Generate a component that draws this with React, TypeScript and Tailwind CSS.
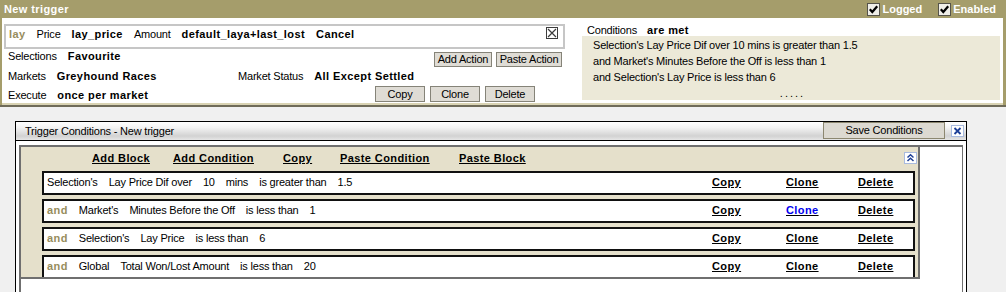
import React from "react";

const bold = "font-bold tracking-[0.4px]";

function CheckBox() {
  return (
    <svg width="13" height="13" viewBox="0 0 13 13" className="shrink-0">
      <rect x="0.5" y="0.5" width="12" height="12" fill="#efeee8" stroke="#55534a" />
      <path d="M2.8 6.2 L5.3 9 L10.2 3.2" fill="none" stroke="#000" strokeWidth="2.2" />
    </svg>
  );
}

function XBox() {
  return (
    <svg width="12" height="12" viewBox="0 0 12 12" className="shrink-0">
      <rect x="0.5" y="0.5" width="11" height="11" fill="#fff" stroke="#3c3c3c" />
      <path d="M2 2 L10 10 M10 2 L2 10" stroke="#3c3c3c" strokeWidth="1.2" />
    </svg>
  );
}

function CloseBox() {
  return (
    <svg width="13" height="12" viewBox="0 0 13 12" className="shrink-0">
      <rect x="0.5" y="0.5" width="12" height="11" fill="#fff" stroke="#a9bbdf" />
      <path d="M3.5 3 L9.5 9 M9.5 3 L3.5 9" stroke="#1d3f97" strokeWidth="1.8" />
    </svg>
  );
}

function CollapseBox() {
  return (
    <svg width="13" height="12" viewBox="0 0 13 12" className="shrink-0">
      <rect x="0.5" y="0.5" width="12" height="11" fill="#fff" stroke="#a9bbdf" />
      <path d="M3.5 5.5 L6.5 2.8 L9.5 5.5 M3.5 9 L6.5 6.3 L9.5 9" fill="none" stroke="#1d3f97" strokeWidth="1.5" />
    </svg>
  );
}

function Btn({ label, w, h }: { label: string; w: string; h: string }) {
  return (
    <div className={`${w} ${h} flex items-center justify-center border border-[#858378] bg-[#dfdcd5] leading-none`}>
      {label}
    </div>
  );
}

const conditions = [
  { and: false, parts: ["Selection's", "Lay Price Dif over", "10", "mins", "is greater than", "1.5"] },
  { and: true, parts: ["Market's", "Minutes Before the Off", "is less than", "1"] },
  { and: true, parts: ["Selection's", "Lay Price", "is less than", "6"] },
  { and: true, parts: ["Global", "Total Won/Lost Amount", "is less than", "20"] },
];

export default function App() {
  return (
    <div className="w-[1006px] h-[292px] overflow-hidden bg-[#f0f0f0] font-['Liberation_Sans',Arial,sans-serif] text-[11px] tracking-[-0.2px] text-black">
      {/* trigger panel */}
      <div className="bg-[#a59d6b] pl-[2px] pr-[3px] border-b-2 border-[#6f6b59]">
        <div className="h-[18px] flex items-center pl-[2px] pr-[7px] text-white">
          <span className={bold}>New trigger</span>
          <div className="ml-auto flex items-center">
            <CheckBox />
            <span className="font-bold tracking-normal ml-[2px]">Logged</span>
            <div className="ml-[16px]">
              <CheckBox />
            </div>
            <span className="font-bold tracking-normal ml-[2px]">Enabled</span>
          </div>
        </div>

        <div className="h-[85px] bg-white flex">
          <div className="ml-[2px] w-[561px] flex flex-col">
            <div className="mt-[6px] h-[25px] border-2 border-[#c6c6c6] flex items-start">
              <div className="flex items-center gap-[11px] h-full pb-[4px] pl-[3px]">
                <span className={`${bold} text-[#978d5d]`}>lay</span>
                <span>Price</span>
                <span className={bold}>lay_price</span>
                <span>Amount</span>
                <span className={bold}>default_laya+last_lost</span>
                <span className={bold}>Cancel</span>
              </div>
              <div className="ml-auto mr-[5px] mt-[1px]">
                <XBox />
              </div>
            </div>

            <div className="h-[18px] flex items-start pl-[4px]">
              <div className="pt-[1px] leading-[13px] flex gap-[11px]">
                <span>Selections</span>
                <span className={bold}>Favourite</span>
              </div>
              <div className="ml-auto mr-[3px] mt-[3px] flex gap-[4px]">
                <Btn label="Add Action" w="w-[58px]" h="h-[15px]" />
                <Btn label="Paste Action" w="w-[66px]" h="h-[15px]" />
              </div>
            </div>

            <div className="h-[19px] flex items-center pl-[4px]">
              <div className="w-[230px] flex gap-[11px]">
                <span>Markets</span>
                <span className={bold}>Greyhound Races</span>
              </div>
              <div className="flex gap-[11px]">
                <span>Market Status</span>
                <span className={bold}>All Except Settled</span>
              </div>
            </div>

            <div className="h-[17px] flex items-start pl-[4px]">
              <div className="pt-[3px] leading-[13px] flex gap-[11px]">
                <span>Execute</span>
                <span className={bold}>once per market</span>
              </div>
              <div className="ml-auto mr-[30px] flex gap-[5px]">
                <Btn label="Copy" w="w-[50px]" h="h-[16px]" />
                <Btn label="Clone" w="w-[50px]" h="h-[16px]" />
                <Btn label="Delete" w="w-[50px]" h="h-[16px]" />
              </div>
            </div>
          </div>

          <div className="ml-[17px] w-[418px] flex flex-col">
            <div className="h-[18px] pt-[6px] pl-[5px] leading-[12px] flex gap-[10px]">
              <span>Conditions</span>
              <span className={bold}>are met</span>
            </div>
            <div className="h-[64px] bg-[#ece9d8] pl-[11px] pt-[1px] leading-[16px]">
              <div>Selection's Lay Price Dif over 10 mins is greater than 1.5</div>
              <div>and Market's Minutes Before the Off is less than 1</div>
              <div>and Selection's Lay Price is less than 6</div>
              <div className="text-center pr-[8px] tracking-[2px]">.....</div>
            </div>
          </div>
        </div>
        <div className="h-[2px] bg-[#d9d3b3]" />
      </div>

      {/* conditions window */}
      <div className="mt-[14px] ml-[15px] w-[952px] h-[200px] border-x border-t border-black bg-white">
        <div className="h-[19px] border-b border-black flex items-start bg-[linear-gradient(to_bottom,#ffffff_0%,#f4f4f4_30%,#d2d2d2_78%,#e6e6e6_100%)]">
          <span className="pl-[9px] h-[18px] flex items-center">Trigger Conditions - New trigger</span>
          <div className="ml-auto w-[122px] h-[17px] flex items-center justify-center bg-[#dcd9d1] border border-[#8c8770]">
            Save Conditions
          </div>
          <div className="ml-[6px] mr-[2px] mt-[3px]">
            <CloseBox />
          </div>
        </div>

        <div className="pt-[4px] px-[3px]">
          <div className="h-[160px] border-t-2 border-l-2 border-r border-[#6f6f6f] flex">
            <div className="w-[899px] h-[132px] bg-[#e5e0cb] border-r-2 border-b-2 border-[#6f6f6f] overflow-hidden">
              <div className="h-[24px] flex items-start">
                <div className={`${bold} underline pl-[71px] pt-[5px] leading-[13px] flex`}>
                  <span className="w-[81px]">Add Block</span>
                  <span className="w-[110px]">Add Condition</span>
                  <span className="w-[57px]">Copy</span>
                  <span className="w-[119px]">Paste Condition</span>
                  <span>Paste Block</span>
                </div>
                <div className="ml-auto mr-[1px] mt-[5px]">
                  <CollapseBox />
                </div>
              </div>

              {conditions.map((c, i) => (
                <div
                  key={i}
                  className="ml-[21px] mr-[3px] h-[24px] mb-[4px] shrink-0 border-2 border-[#111] bg-white flex items-center pl-[3px] pb-[2px]"
                >
                  <div className="flex gap-[11px]">
                    {c.and && <span className={`${bold} text-[#978d5d]`}>and</span>}
                    {c.parts.map((p, j) => (
                      <span key={j}>{p}</span>
                    ))}
                  </div>
                  <div className={`${bold} underline ml-auto w-[201px] flex`}>
                    <span className="w-[74px]">Copy</span>
                    <span className={`w-[72px] ${i === 1 ? "text-[#0000ee]" : ""}`}>Clone</span>
                    <span>Delete</span>
                  </div>
                </div>
              ))}
            </div>
          </div>
        </div>
      </div>
    </div>
  );
}
